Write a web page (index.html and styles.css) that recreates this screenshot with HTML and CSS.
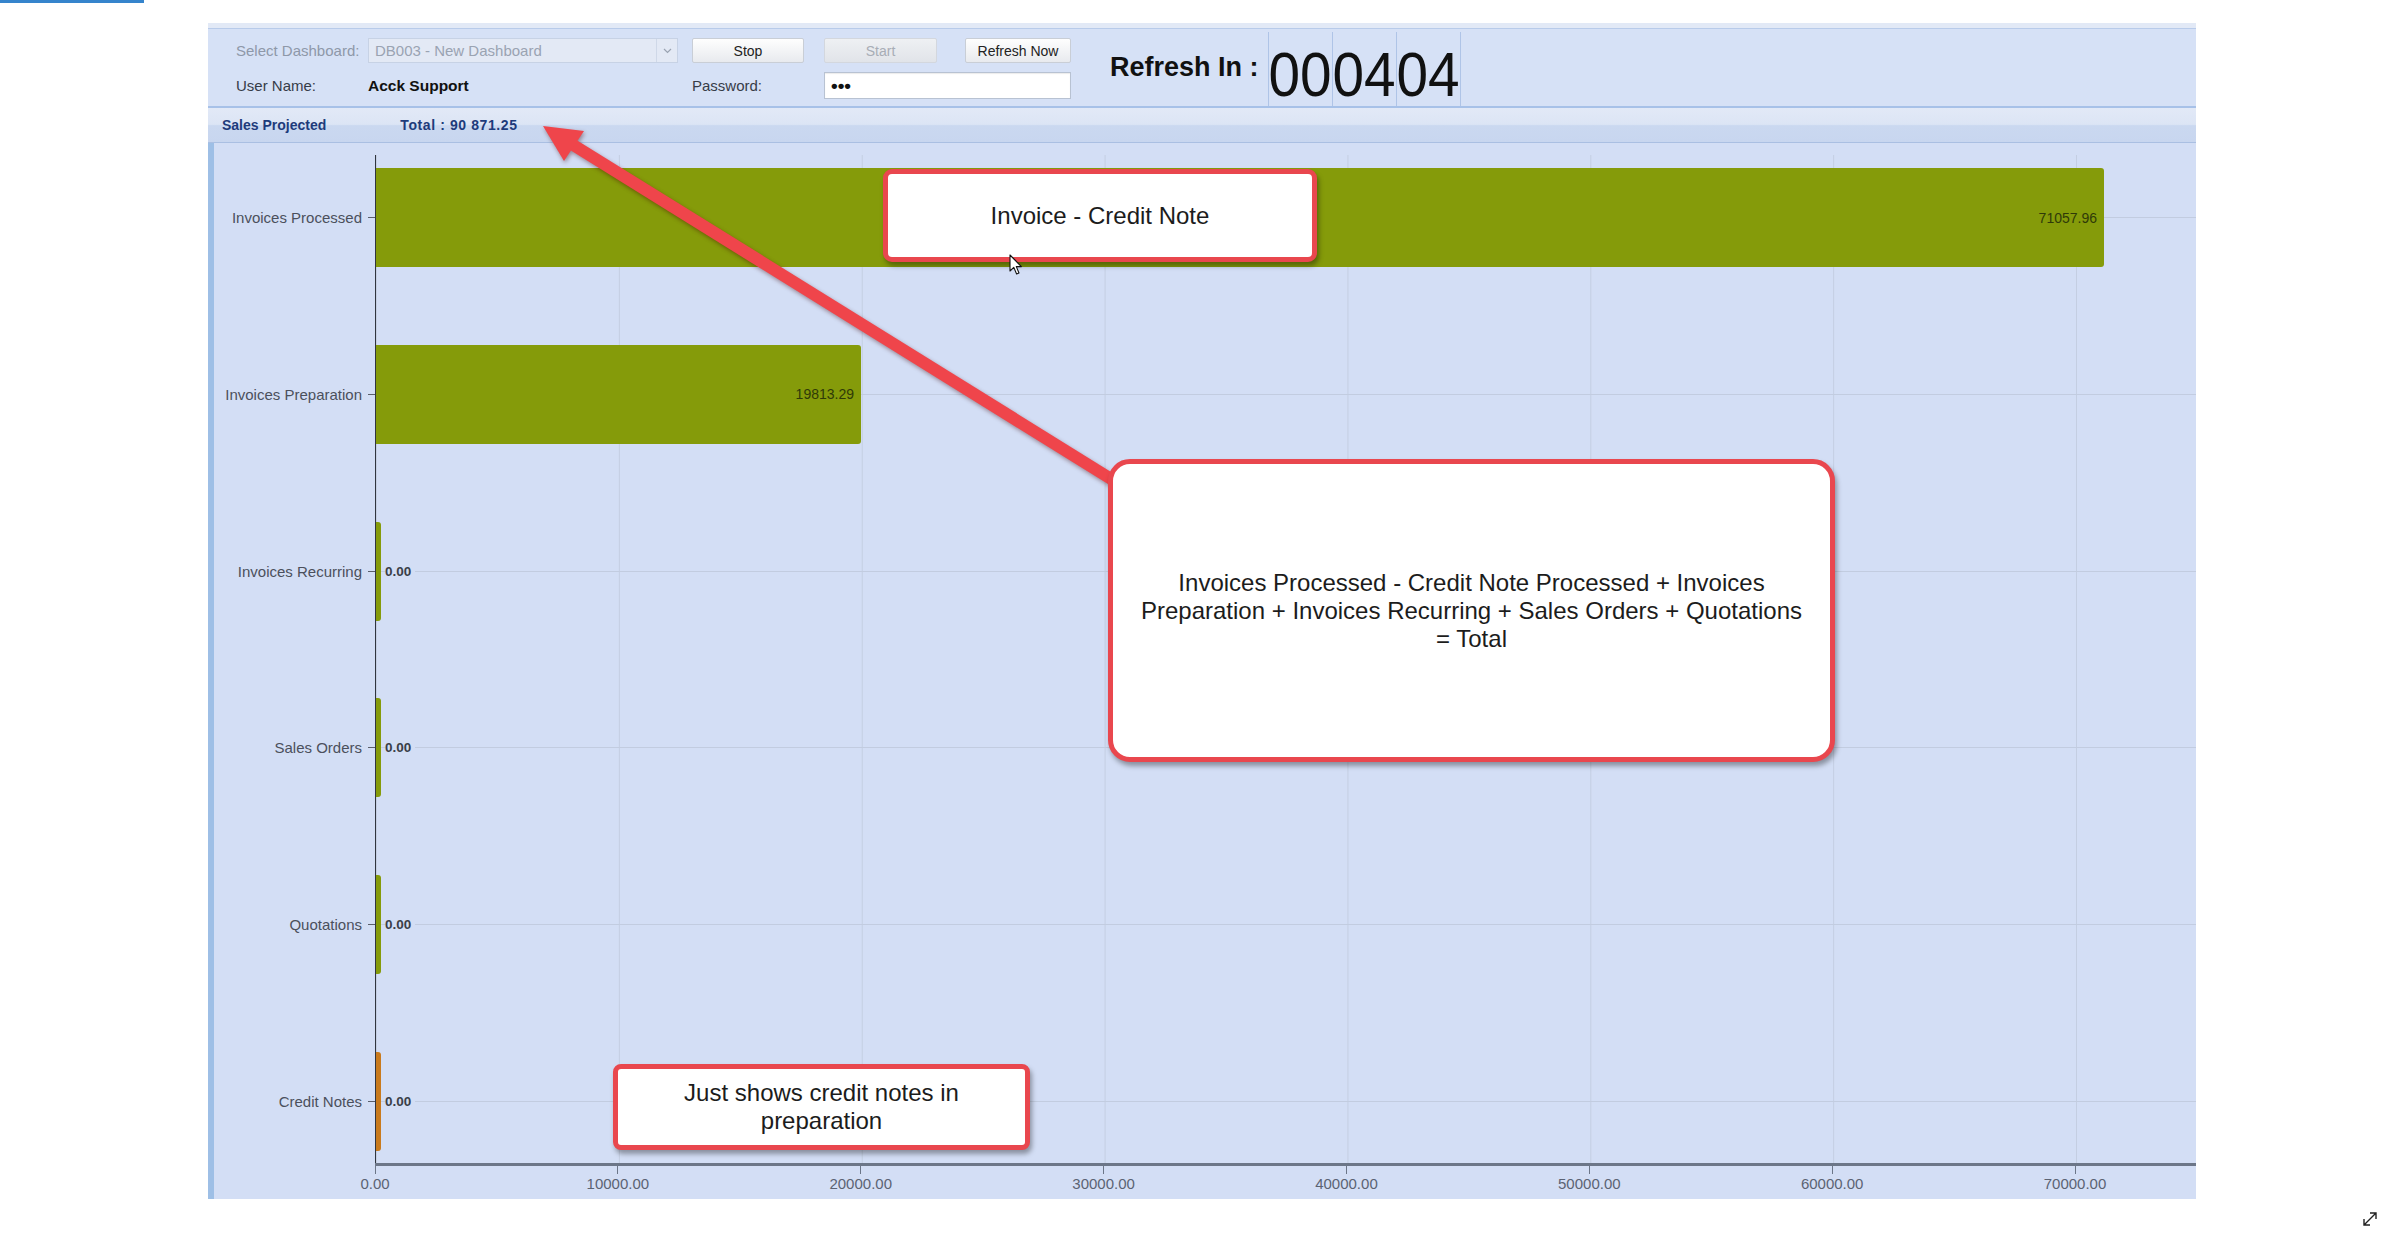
FILE: index.html
```html
<!DOCTYPE html>
<html>
<head>
<meta charset="utf-8">
<title>Sales Projected Dashboard</title>
<link rel="stylesheet" href="styles.css">
</head>
<body>
<div class="tabline"></div>
<div class="app">
  <div class="header">
    <div class="form">
      <span class="lbl dis c1 r1">Select Dashboard:</span>
      <div class="select c2 r1"><span class="txt">DB003 - New Dashboard</span><span class="caret"><svg width="9" height="6" viewBox="0 0 9 6"><path d="M1 1 L4.5 4.5 L8 1" fill="none" stroke="#9aa3b2" stroke-width="1.2"/></svg></span></div>
      <button class="btn c4 r1">Stop</button>
      <button class="btn dis c6 r1">Start</button>
      <button class="btn c8 r1">Refresh Now</button>
      <span class="lbl c1 r2">User Name:</span>
      <span class="val c2 r2">Acck Support</span>
      <span class="lbl c4 r2">Password:</span>
      <div class="pwd r2">&#8226;&#8226;&#8226;</div>
    </div>
    <div class="refresh">Refresh In :</div>
    <div class="digits">
      <div class="cell"><span>00</span></div>
      <div class="cell"><span>04</span></div>
      <div class="cell"><span>04</span></div>
    </div>
  </div>
  <div class="subheader"><span>Sales Projected</span><span class="total">Total : 90 871.25</span></div>
  <div class="chart">
    <div class="labels">
      <div class="lab">Invoices Processed</div>
      <div class="lab">Invoices Preparation</div>
      <div class="lab">Invoices Recurring</div>
      <div class="lab">Sales Orders</div>
      <div class="lab">Quotations</div>
      <div class="lab">Credit Notes</div>
    </div>
    <div class="plot">
      <div class="row"><div class="bar" style="width:1728px">71057.96</div></div>
      <div class="row"><div class="bar" style="width:485px">19813.29</div></div>
      <div class="row"><div class="bar zero"></div><span class="out">0.00</span></div>
      <div class="row"><div class="bar zero"></div><span class="out">0.00</span></div>
      <div class="row"><div class="bar zero"></div><span class="out">0.00</span></div>
      <div class="row"><div class="bar zero orange"></div><span class="out">0.00</span></div>
    </div>
    <div class="xaxis">
      <span class="tick">0.00</span>
      <span class="tick">10000.00</span>
      <span class="tick">20000.00</span>
      <span class="tick">30000.00</span>
      <span class="tick">40000.00</span>
      <span class="tick">50000.00</span>
      <span class="tick">60000.00</span>
      <span class="tick">70000.00</span>
    </div>
  </div>
</div>

<svg class="arrow" width="2400" height="1253" viewBox="0 0 2400 1253">
  <line x1="570" y1="143" x2="1116" y2="482" stroke="#ef454b" stroke-width="12"/>
  <polygon points="543,126 584,131 564,161" fill="#ef454b"/>
</svg>

<div class="callout co1">Invoice - Credit Note</div>
<div class="callout co2">Invoices Processed - Credit Note Processed + Invoices<br>Preparation + Invoices Recurring + Sales Orders + Quotations<br>= Total</div>
<div class="callout co3">Just shows credit notes in<br>preparation</div>

<svg class="cursor" width="14" height="22" viewBox="0 0 14 22">
  <path d="M1 1 L1 17 L4.8 13.4 L7.6 20 L10 19 L7.3 12.6 L12.4 12.6 Z" fill="#fff" stroke="#111" stroke-width="1.1" stroke-linejoin="round"/>
</svg>

<svg class="expand" width="20" height="20" viewBox="0 0 20 20">
  <path d="M4 16 L16 4 M4 10 L4 16 L10 16 M10 4 L16 4 L16 10" fill="none" stroke="#222" stroke-width="1.4"/>
</svg>
</body>
</html>
```

FILE: styles.css
```css
html, body {
  margin: 0;
  padding: 0;
}
body {
  width: 2400px;
  height: 1253px;
  overflow: hidden;
  position: relative;
  background: #ffffff;
  font-family: "Liberation Sans", Arial, sans-serif;
}
.tabline {
  width: 144px;
  height: 3px;
  background: #3584cc;
}
.app {
  margin: 20px 0 0 208px;
  width: 1988px;
}

/* header */
.header {
  height: 83px;
  border-bottom: 2px solid #a7c1e8;
  background: linear-gradient(to bottom, #e2e9f6 0, #e2e9f6 5px, #b8cbea 5px, #b8cbea 6px, #d6e1f6 6px);
  display: flex;
  align-items: flex-start;
  padding-left: 28px;
}
.form {
  margin-top: 15px;
  display: grid;
  grid-template-columns: 132px 310px 14px 112px 20px 113px 28px 106px;
  grid-template-rows: 25px 27px;
  row-gap: 9px;
  align-items: center;
}
.c1 { grid-column: 1; }
.c2 { grid-column: 2; }
.c4 { grid-column: 4; }
.c6 { grid-column: 6; }
.c8 { grid-column: 8; }
.r1 { grid-row: 1; }
.r2 { grid-row: 2; }
.lbl {
  font-size: 15px;
  color: #363c48;
  white-space: nowrap;
}
.lbl.dis { color: #8e98a9; }
.select {
  height: 25px;
  box-sizing: border-box;
  border: 1px solid #c7d2e5;
  background: #e3e9f5;
  display: flex;
  align-items: center;
  font-size: 15px;
  color: #9aa3b2;
}
.select .txt {
  flex: 1;
  padding-left: 6px;
  white-space: nowrap;
}
.caret {
  width: 20px;
  height: 100%;
  border-left: 1px solid #cfd8e8;
  display: flex;
  align-items: center;
  justify-content: center;
}
.btn {
  height: 25px;
  width: 100%;
  font-family: "Liberation Sans", Arial, sans-serif;
  font-size: 14px;
  color: #222;
  border: 1px solid #c9ced6;
  border-radius: 2px;
  background: linear-gradient(#fefefe, #e8eaee);
  padding: 0;
}
.btn.dis {
  color: #a8adb6;
  background: linear-gradient(#eef0f3, #e1e4e9);
  border-color: #d3d7de;
}
.val {
  font-weight: bold;
  font-size: 15.5px;
  color: #111;
  white-space: nowrap;
}
.pwd {
  grid-column: 6 / span 3;
  height: 27px;
  box-sizing: border-box;
  background: #fff;
  border: 1px solid #b8c2d2;
  box-shadow: inset 0 1px 1px rgba(0,0,0,0.08);
  padding-left: 6px;
  font-size: 19px;
  line-height: 25px;
  font-weight: bold;
  color: #111;
  letter-spacing: 0;
}
.refresh {
  margin-left: 39px;
  width: 149px;
  padding-top: 5px;
  line-height: 78px;
  font-size: 27px;
  font-weight: bold;
  color: #111;
  white-space: nowrap;
}
.digits {
  margin-left: 9px;
  margin-top: 9px;
  height: 74px;
  display: flex;
}
.cell {
  width: 64px;
  height: 74px;
  box-sizing: border-box;
  border-left: 1px solid #afc4e7;
  display: flex;
  justify-content: center;
}
.cell:last-child {
  width: 65px;
  border-right: 1px solid #afc4e7;
}
.cell span {
  display: block;
  font-size: 63px;
  line-height: 63px;
  padding-top: 11px;
  transform: scaleX(0.9);
  color: #111;
  white-space: nowrap;
}

/* sub header */
.subheader {
  height: 34px;
  border-bottom: 1px solid #aabfe2;
  background: linear-gradient(to bottom, #e2e9f7 0, #dce5f5 48%, #cad8f0 52%, #c8d6ef 100%);
  display: flex;
  align-items: center;
  padding-left: 14px;
  font-size: 14px;
  font-weight: bold;
  color: #1e3b7b;
}
.total {
  margin-left: 74px;
  letter-spacing: 0.6px;
}

/* chart */
.chart {
  height: 1056px;
  box-sizing: border-box;
  padding-top: 12px;
  border-left: 6px solid #9ebfe6;
  background: #d3def5;
  display: grid;
  grid-template-columns: 161px 1821px;
  grid-template-rows: 1008px 36px;
}
.labels {
  grid-column: 1;
  grid-row: 1;
  display: flex;
  flex-direction: column;
  padding-top: 13px;
  gap: 77.8px;
}
.lab {
  flex: none;
  height: 99px;
  box-sizing: border-box;
  display: flex;
  align-items: center;
  justify-content: flex-end;
  padding-right: 13px;
  font-size: 15px;
  color: #4b505c;
  white-space: nowrap;
  background: linear-gradient(#5a5f6a, #5a5f6a) no-repeat;
  background-position: right 0 top 49px;
  background-size: 7px 1px;
}
.plot {
  grid-column: 2;
  grid-row: 1;
  border-left: 1px solid #30353f;
  padding-top: 13px;
  display: flex;
  flex-direction: column;
  gap: 77.8px;
  background-image: linear-gradient(to right, #c4cee2 0, #c4cee2 1px, transparent 1px);
  background-size: 242.86px 100%;
}
.row {
  flex: none;
  height: 99px;
  display: flex;
  align-items: center;
  background: linear-gradient(#c2cce0, #c2cce0) no-repeat;
  background-position: 0 49px;
  background-size: 100% 1px;
}
.bar {
  flex: none;
  height: 99px;
  box-sizing: border-box;
  background: #859b0a;
  border-radius: 0 3px 3px 0;
  display: flex;
  align-items: center;
  justify-content: flex-end;
  padding-right: 7px;
  font-size: 14px;
  color: #2f3a08;
}
.bar.zero {
  width: 5px;
  padding: 0;
}
.bar.orange { background: #c97a1c; }
.out {
  margin-left: 4px;
  padding-right: 4px;
  background: #d3def5;
  font-size: 13.5px;
  font-weight: bold;
  color: #3a3f48;
}
.xaxis {
  grid-column: 2;
  grid-row: 2;
  border-top: 3px solid #6c7688;
  display: flex;
}
.tick {
  flex: none;
  width: 242.86px;
  text-align: center;
  font-size: 15px;
  line-height: 18px;
  padding-top: 9px;
  color: #5b6373;
  background: linear-gradient(#6c7688, #6c7688) no-repeat;
  background-position: center top;
  background-size: 1px 8px;
}
.tick:first-child { margin-left: -121.43px; }

/* annotations */
.arrow {
  position: absolute;
  left: 0;
  top: 0;
  pointer-events: none;
  filter: drop-shadow(1px 2px 2px rgba(60, 0, 0, 0.4));
}
.callout {
  position: absolute;
  box-sizing: border-box;
  background: #fff;
  border: 5px solid #e9474e;
  box-shadow: 2px 4px 5px rgba(0, 0, 0, 0.35);
  display: flex;
  align-items: center;
  justify-content: center;
  text-align: center;
  font-size: 24px;
  line-height: 28px;
  color: #1c1c1c;
  white-space: nowrap;
}
.co1 { left: 883px; top: 169px; width: 434px; height: 93px; border-radius: 9px; }
.co2 { left: 1108px; top: 459px; width: 727px; height: 303px; border-radius: 22px; }
.co3 { left: 613px; top: 1064px; width: 417px; height: 86px; border-radius: 8px; }
.cursor {
  position: absolute;
  left: 1009px;
  top: 254px;
}
.expand {
  position: absolute;
  left: 2360px;
  top: 1209px;
}
```
